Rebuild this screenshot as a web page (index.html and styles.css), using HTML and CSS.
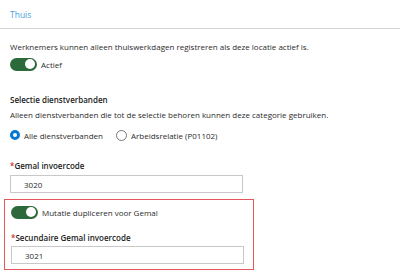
FILE: index.html
```html
<!DOCTYPE html>
<html lang="nl">
<head>
    <meta charset="UTF-8">
    <title>Locatie - Thuis</title>
    <link rel="stylesheet" href="styles.css">
</head>
<body>
    <div class="tabs">
        <span class="tab">Thuis</span>
    </div>

    <div class="content">
        <p class="text">Werknemers kunnen alleen thuiswerkdagen registreren als deze locatie actief is.</p>
        <label class="switch-row">
            <span class="switch on"><span class="knob"></span></span>
            Actief
        </label>

        <div class="section">
            <h4>Selectie dienstverbanden</h4>
            <p class="text">Alleen dienstverbanden die tot de selectie behoren kunnen deze categorie gebruiken.</p>
            <div class="radios">
                <label class="radio-row"><span class="radio checked"></span>Alle dienstverbanden</label>
                <label class="radio-row"><span class="radio"></span>Arbeidsrelatie (P01102)</label>
            </div>
        </div>

        <div class="field">
            <label class="field-label"><span class="req">*</span>Gemal invoercode</label>
            <input class="input" type="text" value="3020">
        </div>

        <div class="highlight">
            <label class="switch-row">
                <span class="switch on"><span class="knob"></span></span>
                Mutatie dupliceren voor Gemal
            </label>
            <div class="field">
                <label class="field-label"><span class="req">*</span>Secundaire Gemal invoercode</label>
                <input class="input" type="text" value="3021">
            </div>
        </div>
    </div>
</body>
</html>
```

FILE: styles.css
```css
body {
    font-family: "Open Sans", sans-serif;
    font-size: 8px;
    color: #2b2b2b;
    margin: 0;
    background: #fff;
}
.tabs {
    height: 28px;
    border-bottom: 1px solid #d4d4d4;
    padding-left: 10px;
    display: flex;
    align-items: center;
}
.tab {
    color: #4a9fe0;
    font-size: 8.5px;
}
.content {
    padding: 11px 10px 0 4px;
}
.text {
    margin: 0;
    padding-left: 6px;
    line-height: 14px;
}
.switch-row {
    display: flex;
    align-items: center;
    gap: 4px;
    padding-left: 6px;
    height: 14px;
    margin-top: 3px;
}
.switch {
    width: 27px;
    height: 13px;
    border-radius: 7px;
    background: #2c6a3c;
    position: relative;
}
.switch .knob {
    position: absolute;
    right: 2px;
    top: 1.5px;
    width: 10px;
    height: 10px;
    border-radius: 50%;
    background: #fff;
}
.section {
    margin-top: 22px;
}
.section h4 {
    margin: 0;
    padding-left: 6px;
    font-size: 8px;
    font-weight: 600;
    line-height: 14px;
    color: #222;
}
.section .text {
    margin-top: 1px;
}
.radios {
    display: flex;
    gap: 13px;
    padding-left: 6px;
    margin-top: 6px;
}
.radio-row {
    display: flex;
    align-items: center;
    gap: 4px;
    height: 14px;
}
.radio {
    width: 9px;
    height: 9px;
    border: 1px solid #777;
    border-radius: 50%;
    box-sizing: content-box;
}
.radio.checked {
    width: 4px;
    height: 4px;
    border: 3.5px solid #0b78d0;
}
.field {
    margin-top: 17px;
    padding-left: 6px;
}
.field-label {
    display: block;
    font-weight: 600;
    color: #222;
    line-height: 14px;
}
.req {
    color: #d0342c;
}
.input {
    display: block;
    box-sizing: border-box;
    width: 233px;
    height: 18px;
    margin-top: 2px;
    border: 1px solid #c8c8c8;
    padding: 0 13px;
    font-family: "Open Sans", sans-serif;
    font-size: 8px;
    color: #2b2b2b;
    outline: none;
}
.highlight {
    margin-top: 6px;
    width: 250px;
    box-sizing: border-box;
    border: 1px solid #e5555b;
    padding: 5px 0 5px 0;
}
.highlight .switch-row {
    margin-top: 0;
}
.highlight .field {
    margin-top: 12px;
}
.highlight .input {
    margin-top: 1px;
}
```
